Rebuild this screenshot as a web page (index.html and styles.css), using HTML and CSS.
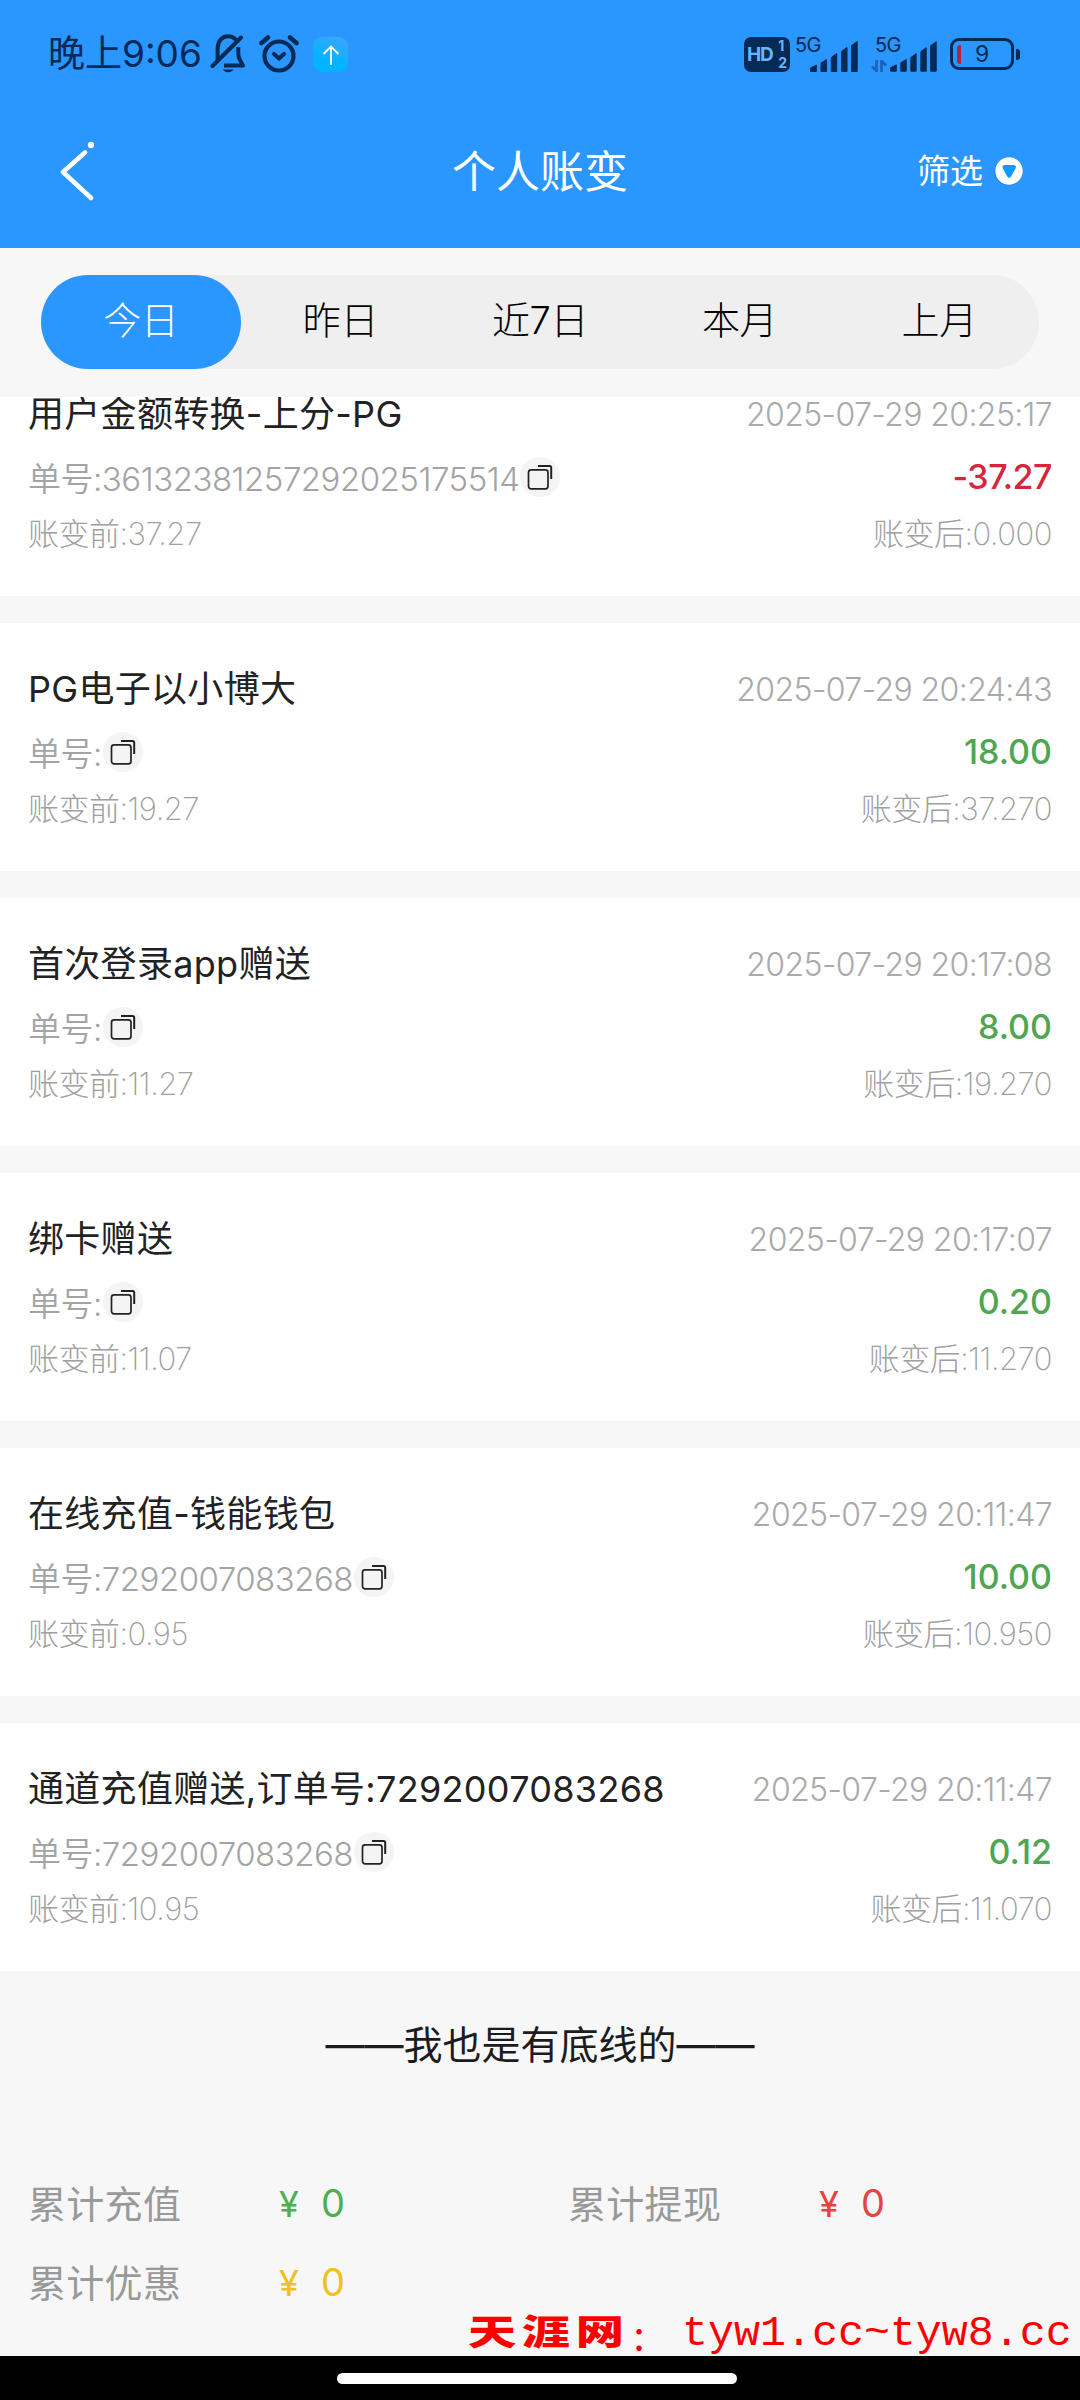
FILE: index.html
```html
<!DOCTYPE html>
<html lang="zh-CN">
<head>
<meta charset="utf-8">
<title>个人账变</title>
<link rel="stylesheet" href="styles.css">
</head>
<body>
<svg class="defs" width="0" height="0" aria-hidden="true">
  <symbol id="copy" viewBox="0 0 40 40">
    <circle cx="20" cy="20" r="20" fill="#f4f4f4"/>
    <rect x="8.5" y="12.8" width="19.5" height="19" rx="2.6" fill="none" stroke="#222" stroke-width="1.7"/>
    <path d="M18 9.1H29.6Q31.2 9.1 31.2 10.7V22" fill="none" stroke="#222" stroke-width="2"/>
  </symbol>
  <symbol id="signal" viewBox="0 0 48 32">
    <path stroke-width="1" stroke-linejoin="round" d="M.5 28L6.400 25V31.500H.5Z M11 23L16.600 19.500V31.500H11Z M21.300 17.500L26.700 13.500V31.500H21.300Z M31.500 11.500L37 7.500V31.500H31.500Z M41.500 5.500L47.200 1.500V31.500H41.500Z"/>
  </symbol>
</svg>

<header class="header">
  <div class="status">
    <div class="status-left">
      <span class="clock">晚上9:06</span>
      <svg class="ic-bell" viewBox="0 0 36 40" fill="none" stroke="#042a55" stroke-width="4">
        <path d="M7.6 27V15C7.6 7 12 2.3 18 2.3C21.500 2.300 24 3.500 26 6"/>
        <path d="M28.300 13V20Q28.300 24 33 31.500H14" stroke-linejoin="round"/>
        <path d="M2.500 32L31 3.500" stroke-linecap="round"/>
        <path d="M12.500 35.500H24Q18 41 12.500 35.500Z" fill="#042a55" stroke="none"/>
      </svg>
      <svg class="ic-alarm" viewBox="0 0 40 38" fill="none" stroke="#042a55" stroke-linecap="round">
        <circle cx="20" cy="21" r="14.500" stroke-width="4.200"/>
        <path d="M2.500 8L9 2.500M31 2.500L37.500 8" stroke-width="4.600"/>
        <path d="M15 19L20 23.500L25 19" stroke-width="4.200" stroke-linejoin="round"/>
      </svg>
      <span class="upload">
        <svg width="18" height="20" viewBox="0 0 18 20" fill="none" stroke="#fff" stroke-width="1.800"><path d="M9 20V2M1.500 9L9 1.500L16.500 9"/></svg>
      </span>
    </div>
    <div class="status-right">
      <span class="hd"><b>HD</b><span class="hd-sim"><i>1</i><i>2</i></span></span>
      <span class="net"><span class="gen">5G</span><svg class="signal"><use href="#signal"/></svg></span>
      <span class="net second"><span class="gen">5G</span>
        <svg class="traffic" viewBox="0 0 16 12" fill="none" stroke="#1b62b4" stroke-width="2.600"><path d="M5.500 0V11L1 6.500M10.500 12V1L15 5.500"/></svg>
        <svg class="signal"><use href="#signal"/></svg></span>
      <span class="battery"><i class="charge"></i><span class="level">9</span></span><i class="battery-tip"></i>
    </div>
  </div>
  <nav class="navbar">
    <svg class="back" width="34" height="60" viewBox="0 0 34 60" fill="none" stroke="#fff" stroke-linecap="round">
      <path d="M25 11.500L3 31L31 57" stroke-width="4.600" stroke-linejoin="round"/>
      <circle cx="31" cy="4" r="3.200" fill="#fff" stroke="none"/>
    </svg>
    <h1 class="page-title">个人账变</h1>
    <div class="filter">筛选
      <svg class="filter-ic" width="30" height="30" viewBox="0 0 30 30"><circle cx="14.500" cy="15.500" r="14" fill="#1677d2" opacity=".6"/><circle cx="15" cy="15" r="13.700" fill="#fff"/><path d="M10.500 9H20Q23 9.500 21.500 12.500L17 20.500Q15.200 23 13.300 20.500L8.900 12.500Q7.500 9.500 10.500 9Z" fill="#0d9bff"/></svg>
    </div>
  </nav>
</header>

<div class="tabs-wrap">
  <div class="tabs">
    <span class="tab active">今日</span><span class="tab">昨日</span><span class="tab">近7日</span><span class="tab">本月</span><span class="tab">上月</span>
  </div>
</div>

<main class="list">
  <article class="card">
    <div class="row r1"><h2>用户金额转换-上分-PG</h2><time>2025-07-29 20:25:17</time></div>
    <div class="row r2"><span class="order">单号:36132381257292025175514<svg class="copy"><use href="#copy"/></svg></span><span class="amount minus">-37.27</span></div>
    <div class="row r3"><span>账变前:37.27</span><span>账变后:0.000</span></div>
  </article>
  <article class="card">
    <div class="row r1"><h2>PG电子以小博大</h2><time>2025-07-29 20:24:43</time></div>
    <div class="row r2"><span class="order">单号:<svg class="copy"><use href="#copy"/></svg></span><span class="amount">18.00</span></div>
    <div class="row r3"><span>账变前:19.27</span><span>账变后:37.270</span></div>
  </article>
  <article class="card">
    <div class="row r1"><h2>首次登录app赠送</h2><time>2025-07-29 20:17:08</time></div>
    <div class="row r2"><span class="order">单号:<svg class="copy"><use href="#copy"/></svg></span><span class="amount">8.00</span></div>
    <div class="row r3"><span>账变前:11.27</span><span>账变后:19.270</span></div>
  </article>
  <article class="card">
    <div class="row r1"><h2>绑卡赠送</h2><time>2025-07-29 20:17:07</time></div>
    <div class="row r2"><span class="order">单号:<svg class="copy"><use href="#copy"/></svg></span><span class="amount">0.20</span></div>
    <div class="row r3"><span>账变前:11.07</span><span>账变后:11.270</span></div>
  </article>
  <article class="card">
    <div class="row r1"><h2>在线充值-钱能钱包</h2><time>2025-07-29 20:11:47</time></div>
    <div class="row r2"><span class="order">单号:7292007083268<svg class="copy"><use href="#copy"/></svg></span><span class="amount">10.00</span></div>
    <div class="row r3"><span>账变前:0.95</span><span>账变后:10.950</span></div>
  </article>
  <article class="card">
    <div class="row r1"><h2>通道充值赠送,订单号:7292007083268</h2><time>2025-07-29 20:11:47</time></div>
    <div class="row r2"><span class="order">单号:7292007083268<svg class="copy"><use href="#copy"/></svg></span><span class="amount">0.12</span></div>
    <div class="row r3"><span>账变前:10.95</span><span>账变后:11.070</span></div>
  </article>
  <p class="end">——我也是有底线的——</p>
</main>

<footer class="totals">
  <div class="total"><span>累计充值</span><span class="sum green"><i>¥</i>0</span></div>
  <div class="total"><span>累计提现</span><span class="sum red"><i>¥</i>0</span></div>
  <div class="total"><span>累计优惠</span><span class="sum yellow"><i>¥</i>0</span></div>
</footer>
<div class="home"><i></i></div>
<div class="watermark"><b>天涯网</b><span class="wm-colon">:</span><span class="wm-url">tyw1.cc~tyw8.cc</span></div>
</body>
</html>
```
FILE: styles.css
```css
* { box-sizing: border-box; }
body {
  margin: 0;
  width: 1080px;
  height: 2400px;
  display: flex;
  flex-direction: column;
  position: relative;
  overflow: hidden;
  background: #f7f7f7;
  font-family: Inter, "Noto Sans CJK SC", sans-serif;
  white-space: nowrap;
}
i { font-style: normal; }
h1, h2, p { margin: 0; }
.defs { position: absolute; }

/* header */
.header { height: 248px; background: #2a96ff; color: #fff; }
.status {
  height: 108px;
  padding: 0 60px 0 48px;
  display: flex;
  justify-content: space-between;
  color: #042a55;
}
.status-left, .status-right { display: flex; align-items: center; }
.clock { width: 154px; font-size: 37px; line-height: 50px; font-weight: 400; letter-spacing: 0; }
.ic-bell { width: 36px; height: 40px; margin-left: 8px; }
.ic-alarm { width: 40px; height: 38px; margin-left: 13px; }
.upload {
  width: 35px; height: 35px; margin: 1px 0 0 14px;
  border-radius: 9px;
  background: linear-gradient(20deg, #00b4ff 30%, #3fa5ff);
  display: flex; align-items: center; justify-content: center;
}
.hd {
  width: 46px; height: 35px; padding: 0 3px;
  border-radius: 7px; background: #042a55; color: #6bb4ff;
  display: flex; align-items: center; justify-content: space-between;
  font-size: 19px; letter-spacing: -1.2px;
}
.hd-sim { display: flex; flex-direction: column; font-size: 14px; line-height: 17px; font-weight: 700; letter-spacing: 0; }
.net { width: 63px; height: 36px; margin-left: 5px; display: flex; align-items: flex-end; justify-content: flex-end; position: relative; }
.net.second { width: 66px; margin-left: 13px; }
.gen { position: absolute; left: 0; top: 1px; font-size: 20px; line-height: 17px; letter-spacing: -.6px; }
.second .gen { left: 4px; }
.signal { width: 48px; height: 32px; fill: #042a55; stroke: #042a55; }
.traffic { width: 16px; height: 12px; margin-right: 3px; flex: none; }
.battery {
  width: 64px; height: 32px; margin-left: 13px;
  border: 3px solid #042a55; border-radius: 9px;
  display: flex; align-items: center;
}
.charge { width: 4px; height: 19px; margin-left: 4px; background: #b7233b; border-radius: 3px 0 0 3px; }
.level { margin-left: 14px; font-size: 23px; }
.battery-tip { width: 4px; height: 11px; margin-left: 2px; border-radius: 0 3px 3px 0; background: #042a55; }
.navbar {
  height: 128px;
  padding: 0 56px 0 60px;
  display: grid;
  grid-template-columns: 1fr auto 1fr;
  align-items: center;
}
.back { margin-top: -2px; }
.page-title { padding-right: 4px; font-size: 44px; line-height: 64px; font-weight: 400; }
.filter { justify-self: end; margin-top: -3px; display: flex; align-items: center; gap: 11px; font-size: 33px; line-height: 48px; }
.filter-ic { display: block; }

/* tabs */
.tabs-wrap { height: 149px; padding: 27px 41px 0; }
.tabs { height: 94px; display: flex; border-radius: 47px; background: #efefef; }
.tab { flex: 1; text-align: center; font-size: 38px; line-height: 90px; font-weight: 300; letter-spacing: -.4px; color: #000; }
.tab.active { background: #2a96ff; border-radius: 47px; color: #fff; }

/* list, scrolled so that the first card is cut by the tabs */
.list { height: 1708px; overflow: hidden; display: flex; flex-direction: column; gap: 27px; }
.card { flex: none; height: 248px; padding: 36px 28px 0; background: #fff; }
.card:first-child { margin-top: -49px; }
.row { display: flex; justify-content: space-between; align-items: center; }
.r1 { height: 60px; }
.r2 { height: 65px; }
.r3 { height: 44px; font-size: 31px; font-weight: 200; letter-spacing: -.5px; color: #a0a0a0; }
h2 { font-size: 36px; line-height: 48px; font-weight: 400; letter-spacing: .3px; color: #222; }
time { font-size: 32px; font-weight: 350; letter-spacing: -.6px; color: #aaa; }
.order { display: flex; align-items: center; font-size: 33px; font-weight: 350; letter-spacing: -.5px; color: #a4a4a4; }
.copy { width: 40px; height: 40px; margin-left: 1px; }
.amount { font-size: 34px; font-weight: 500; color: #4fa650; }
.minus { letter-spacing: -.5px; color: #d7263b; }
.end { text-align: center; font-size: 39px; line-height: 94px; color: #1c1c1e; }

/* totals */
.totals {
  height: 251px; padding: 57px 0 0;
  display: grid; grid-template-columns: 540px 540px; grid-auto-rows: 79px;
  font-size: 38px; color: #999;
}
.total { padding-left: 28px; display: flex; align-items: center; }
.total > span:first-child { width: 250px; letter-spacing: .3px; }
.sum { padding-top: 3px; display: flex; align-items: baseline; }
.sum i { width: 43px; padding-left: 1px; font-size: 36px; }
.green { color: #4caf50; }
.red { color: #e64340; }
.yellow { color: #f0c020; }
.home { height: 44px; background: #000; padding: 17px 0 0 337px; }
.home i { display: block; width: 400px; height: 11px; border-radius: 6px; background: #fff; }
.watermark { position: absolute; left: 468px; top: 2304px; height: 56px; display: flex; align-items: center; color: #f00; }
.watermark b { width: 158px; margin-top: -4px; font: 900 35px/52px "Noto Sans CJK SC", sans-serif; letter-spacing: 4px; transform: scaleX(1.38); transform-origin: 0 50%; }
.wm-colon { width: 56px; padding: 6px 0 0 7px; font-size: 42px; }
.wm-url { padding-top: 4px; font: 43.300px/56px "Liberation Mono", monospace; }
```
